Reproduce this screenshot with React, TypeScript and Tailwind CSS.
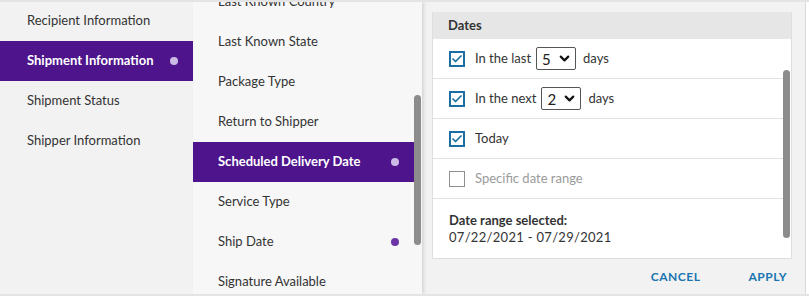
import { Check, ChevronDown } from 'lucide-react'

const leftItems = [
  { label: 'Recipient Information' },
  { label: 'Shipment Information', active: true },
  { label: 'Shipment Status' },
  { label: 'Shipper Information' },
]

const fieldItems = [
  { label: 'Last Known Country' },
  { label: 'Last Known State' },
  { label: 'Package Type' },
  { label: 'Return to Shipper' },
  { label: 'Scheduled Delivery Date', active: true },
  { label: 'Service Type' },
  { label: 'Ship Date', marked: true },
  { label: 'Signature Available' },
]

function Checkbox({ checked }: { checked: boolean }) {
  return (
    <div
      className={
        checked
          ? 'w-4 h-4 border-2 border-[#1b6fa3] flex items-center justify-center bg-white'
          : 'w-4 h-4 border-[1.5px] border-[#8f8f8f] bg-white'
      }
    >
      {checked && <Check size={12} strokeWidth={3.5} className="text-[#1b6fa3]" />}
    </div>
  )
}

function DaySelect({ value }: { value: string }) {
  return (
    <div className="w-[40px] h-[23px] border border-[#555] rounded-[2px] flex items-center justify-between pl-[5px] pr-[3px] bg-white">
      <span className="text-[15px] text-[#222] leading-none mt-[2px]">{value}</span>
      <ChevronDown size={15} strokeWidth={3.5} className="text-[#111]" />
    </div>
  )
}

export default function App() {
  return (
    <div
      className="flex w-[809px] h-[296px] overflow-hidden bg-[#f2f2f2] border-t-2 border-b-2 border-[#e4e4e4] text-[13px] text-[#333]"
      style={{ fontFamily: 'Lato, "Open Sans", sans-serif' }}
    >
      {/* Categories */}
      <div className="w-[193px] shrink-0 flex flex-col -mt-[1px]">
        {leftItems.map(item => (
          <div
            key={item.label}
            className={
              item.active
                ? 'h-10 flex items-center justify-between pl-[27px] pr-[15px] bg-[#4d148c] text-white font-bold'
                : 'h-10 flex items-center pl-[27px]'
            }
          >
            <span>{item.label}</span>
            {item.active && <span className="w-2 h-2 rounded-full bg-[#cbbbe4]" />}
          </div>
        ))}
      </div>

      {/* Fields */}
      <div className="relative w-[229px] shrink-0 bg-[#f7f7f7] shadow-[2px_0_3px_rgba(0,0,0,0.12)] overflow-hidden z-10">
        <div className="flex flex-col w-[221px] mt-[-20px]">
          {fieldItems.map(item => (
            <div
              key={item.label}
              className={
                item.active
                  ? 'h-10 shrink-0 flex items-center justify-between pl-[25px] pr-[15px] bg-[#4d148c] text-white font-bold'
                  : 'h-10 shrink-0 flex items-center justify-between pl-[25px] pr-[15px]'
              }
            >
              <span>{item.label}</span>
              {item.active && <span className="w-2 h-2 rounded-full bg-[#cbbbe4]" />}
              {item.marked && <span className="w-2 h-2 rounded-full bg-[#6b35a8]" />}
            </div>
          ))}
        </div>
        <div className="absolute right-[1px] top-[93px] w-[7px] h-[150px] rounded-full bg-[#8c8c8c]" />
      </div>

      {/* Date filter */}
      <div className="flex-1 flex flex-col pl-[10px] pr-[13px] pt-[10px]">
        <div className="w-[360px] border-l border-r border-b border-[#dedede] bg-white">
          <div className="h-[27px] bg-[#e6e6e6] flex items-center pl-[15px] font-bold text-[#333]">Dates</div>
          <div className="relative">
            <div className="mr-[8px]">
              <div className="h-10 flex items-center pl-[16px] border-b border-[#e2e2e2]">
                <Checkbox checked />
                <span className="ml-[10px] mr-[5px]">In the last</span>
                <DaySelect value="5" />
                <span className="ml-[7px]">days</span>
              </div>
              <div className="h-10 flex items-center pl-[16px] border-b border-[#e2e2e2]">
                <Checkbox checked />
                <span className="ml-[10px] mr-[5px]">In the next</span>
                <DaySelect value="2" />
                <span className="ml-[7px]">days</span>
              </div>
              <div className="h-10 flex items-center pl-[16px] border-b border-[#e2e2e2]">
                <Checkbox checked />
                <span className="ml-[10px]">Today</span>
              </div>
              <div className="h-10 flex items-center pl-[16px] border-b border-[#e2e2e2]">
                <Checkbox checked={false} />
                <span className="ml-[10px] text-[#9a9a9a]">Specific date range</span>
              </div>
              <div className="h-[59px] pl-[16px] pt-[13px] leading-[17px]">
                <div className="font-bold">Date range selected:</div>
                <div className="tracking-[0.3px]">07/22/2021 - 07/29/2021</div>
              </div>
            </div>
            <div className="absolute right-[1px] top-[31px] w-[7px] h-[168px] rounded-full bg-[#8c8c8c]" />
          </div>
        </div>
        <div className="w-[360px] flex justify-end items-center gap-[48px] pr-[5px] h-[38px] text-[12px] font-bold tracking-[0.5px] text-[#1a75b0]">
          <span>CANCEL</span>
          <span>APPLY</span>
        </div>
      </div>

      <div className="w-1 shrink-0 border-l border-[#d8d8d8] bg-white" />
    </div>
  )
}
